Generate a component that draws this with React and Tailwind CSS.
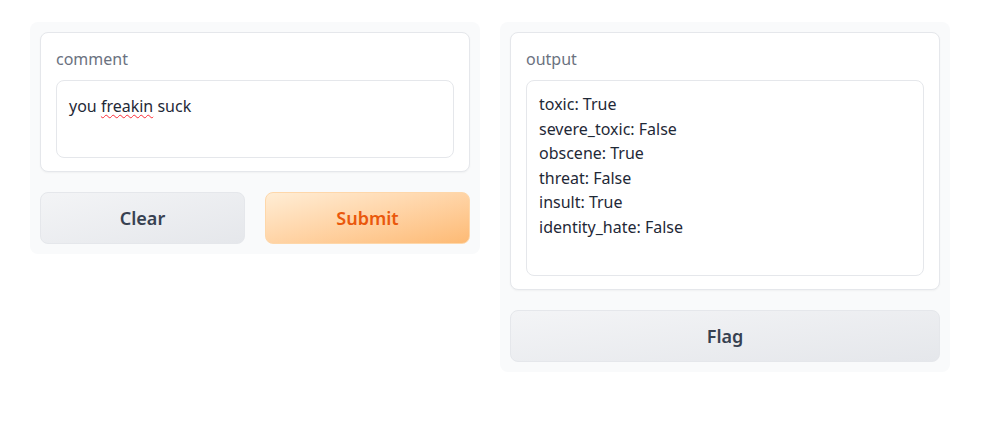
const font = { fontFamily: '"Noto Sans", "Open Sans", sans-serif' };

const outputs = [
  "toxic: True",
  "severe_toxic: False",
  "obscene: True",
  "threat: False",
  "insult: True",
  "identity_hate: False",
];

const Card = ({ label, children }) => (
  <div className="bg-white border border-[#e5e7eb] rounded-lg px-[15px] pt-[15px] pb-[13px] shadow-[0_1px_2px_rgba(0,0,0,0.04)]">
    <div className="text-[16px] leading-[22px] text-[#6b7280] mb-[10px]">{label}</div>
    {children}
  </div>
);

export default function App() {
  return (
    <div className="w-[982px] h-[426px] bg-white pt-[22px] pl-[30px] flex gap-5 items-start" style={font}>
      {/* input panel */}
      <div className="w-[450px] bg-[#f9fafb] rounded-lg p-[10px]">
        <Card label="comment">
          <div className="h-[78px] border border-[#e5e7eb] rounded-lg px-3 pt-[13px] text-[16px] leading-6 text-[#1f2937]">
            you{" "}
            <span className="underline decoration-wavy decoration-red-500 decoration-1 underline-offset-2">freakin</span>{" "}
            suck
          </div>
        </Card>

        <div className="grid grid-cols-2 gap-5 mt-5">
          <button className="h-[52px] rounded-lg border border-[#e5e7eb] bg-gradient-to-br from-[#f3f4f6] to-[#e5e7eb] text-[18px] font-semibold text-[#374151]">
            Clear
          </button>
          <button className="h-[52px] rounded-lg border border-[#fed7aa] bg-gradient-to-br from-[#ffedd5] to-[#fdba74] text-[18px] font-semibold text-[#ea580c]">
            Submit
          </button>
        </div>
      </div>

      {/* output panel */}
      <div className="w-[450px] bg-[#f9fafb] rounded-lg p-[10px]">
        <Card label="output">
          <div className="h-[196px] border border-[#e5e7eb] rounded-lg px-3 pt-[11px] text-[16px] leading-[24.5px] text-[#1f2937]">
            {outputs.map((line, i) => (
              <div key={i}>{line}</div>
            ))}
          </div>
        </Card>

        <button className="w-full h-[52px] mt-5 rounded-lg border border-[#e5e7eb] bg-gradient-to-br from-[#f3f4f6] to-[#e5e7eb] text-[18px] font-semibold text-[#374151]">
          Flag
        </button>
      </div>
    </div>
  );
}
